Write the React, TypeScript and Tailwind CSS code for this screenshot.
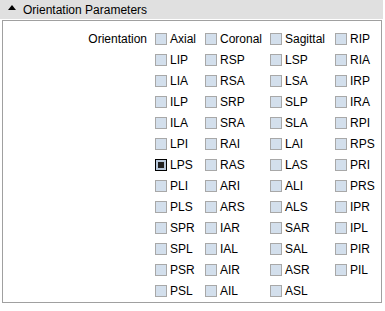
import React from 'react';

const rows: string[][] = [
  ['Axial', 'Coronal', 'Sagittal', 'RIP'],
  ['LIP', 'RSP', 'LSP', 'RIA'],
  ['LIA', 'RSA', 'LSA', 'IRP'],
  ['ILP', 'SRP', 'SLP', 'IRA'],
  ['ILA', 'SRA', 'SLA', 'RPI'],
  ['LPI', 'RAI', 'LAI', 'RPS'],
  ['LPS', 'RAS', 'LAS', 'PRI'],
  ['PLI', 'ARI', 'ALI', 'PRS'],
  ['PLS', 'ARS', 'ALS', 'IPR'],
  ['SPR', 'IAR', 'SAR', 'IPL'],
  ['SPL', 'IAL', 'SAL', 'PIR'],
  ['PSR', 'AIR', 'ASR', 'PIL'],
  ['PSL', 'AIL', 'ASL', ''],
];

const colWidths = ['w-[50px]', 'w-[65px]', 'w-[65px]', 'w-[45px]'];

const CheckBox = ({ label, checked }: { label: string; checked?: boolean }) => (
  <div className="flex items-center h-[21px]">
    {checked ? (
      <div className="w-[12px] h-[12px] border border-black bg-[#b8c8dc] flex items-center justify-center">
        <div className="w-[6px] h-[6px] bg-[#222]" />
      </div>
    ) : (
      <div className="w-[12px] h-[12px] border border-[#a8a8a8] bg-[#d3dfec]" />
    )}
    <span className="ml-[3px] text-[12px] leading-none text-black">{label}</span>
  </div>
);

export default function App() {
  return (
    <div className="w-[385px] h-[311px] bg-white" style={{ fontFamily: '"Liberation Sans", Arial, sans-serif' }}>
      <div className="h-[19px] w-[383px] bg-[#e0e0e0] flex items-center">
        <svg width="8" height="5" viewBox="0 0 8 5" className="ml-[8px] mb-[4px]">
          <polygon points="0,5 4,0 8,5" fill="#000" />
        </svg>
        <span className="ml-[7px] text-[12px] text-black">Orientation Parameters</span>
      </div>
      <div className="mt-[1px] ml-[2px] w-[380px] h-[283px] border border-[#a0a0a0] flex pt-[7px]">
        <div className="w-[144px] flex justify-end items-start">
          <div className="h-[21px] flex items-center text-[12px] text-black">Orientation</div>
        </div>
        <div className="ml-[8px] flex flex-col">
          {rows.map((r, i) => (
            <div key={i} className="flex">
              {r.map((c, j) => (
                <div key={j} className={colWidths[j]}>
                  {c && <CheckBox label={c} checked={c === 'LPS'} />}
                </div>
              ))}
            </div>
          ))}
        </div>
      </div>
    </div>
  );
}
